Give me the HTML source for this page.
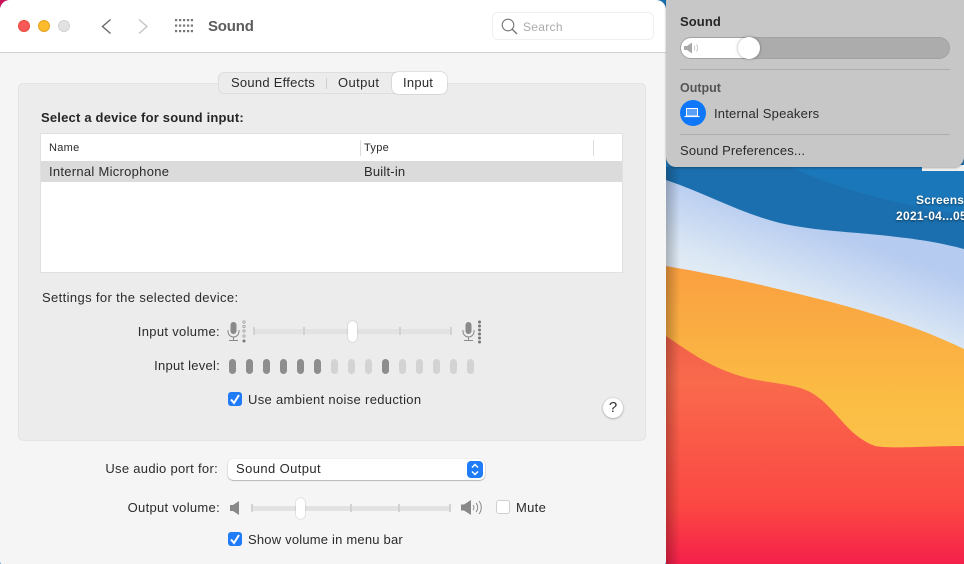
<!DOCTYPE html>
<html><head><meta charset="utf-8"><style>
html,body{margin:0;padding:0;width:964px;height:564px;overflow:hidden;background:#1b6fae}
*{box-sizing:border-box}
body{font-family:"Liberation Sans",sans-serif;font-size:13px;color:#2b2b2b;position:relative}
.t{position:absolute;white-space:nowrap;line-height:16px;letter-spacing:.25px}
.r{text-align:right}
.a{position:absolute}
.win{position:absolute;left:0;top:0;width:666px;height:567px;background:#f5f5f5;border-radius:10px 10px 6px 6px;overflow:hidden}
.pill{position:absolute;top:359px;width:7px;height:15px;border-radius:3.5px;background:#d3d3d3}
.pill.d{background:#8d8d8d}
.chk{position:absolute;width:14px;height:14px;border-radius:3px;background:#1f7cf6}
.tick{position:absolute;width:2px;height:8px;background:#d2d2d2}
.track{position:absolute;height:5px;background:#e2e2e2;border-radius:2px}
.thumb{position:absolute;width:9px;height:21px;background:#fff;border-radius:5px;box-shadow:0 0 1.5px rgba(0,0,0,.3)}
</style></head><body>
<div class="a" style="left:0;top:0;width:12px;height:8px;background:#c8125a"></div>
<svg class="a" style="left:666px;top:0" width="298" height="564" viewBox="666 0 298 564">
<defs>
<linearGradient id="lb" gradientUnits="userSpaceOnUse" x1="800" y1="220" x2="760" y2="330"><stop offset="0" stop-color="#b6cbf0"/><stop offset=".6" stop-color="#dce8f4"/><stop offset="1" stop-color="#e8f0f6"/></linearGradient>
<linearGradient id="or" x1="0" y1="0" x2="0" y2="1"><stop offset="0" stop-color="#fa9f40"/><stop offset=".7" stop-color="#fbbd44"/><stop offset="1" stop-color="#fbc24a"/></linearGradient>
<linearGradient id="rd" x1="0" y1="0" x2="0" y2="1"><stop offset="0" stop-color="#f0604a"/><stop offset=".2" stop-color="#f96a4c"/><stop offset=".75" stop-color="#fb4743"/><stop offset="1" stop-color="#f5204a"/></linearGradient>
<linearGradient id="sh" x1="0" y1="0" x2="1" y2="0"><stop offset="0" stop-color="#000" stop-opacity=".24"/><stop offset="1" stop-color="#000" stop-opacity="0"/></linearGradient>
</defs>
<rect x="666" y="0" width="298" height="564" fill="#1b6fae"/>
<path d="M790 167C840 190 900 205 964 215V167Z" fill="#1a77ba"/>
<path d="M666 180C705 193 740 213 780 223C820 232 860 232 897 237C925 240 945 244 964 249V350H666Z" fill="url(#lb)"/>
<path d="M666 266C730 277 780 289 831 302C880 315 925 330 964 349V460H666Z" fill="url(#or)"/>
<path d="M666 336C690 352 710 368 747 378C775 384 795 384 810 392C835 405 845 435 875 446C890 449 930 446 964 446V564H666Z" fill="url(#rd)"/>
<rect x="666" y="167" width="14" height="397" fill="url(#sh)"/>
</svg>
<div class="a" style="left:922px;top:165px;width:42px;height:6px;background:#f2f2f2"></div>
<div class="t" style="left:916px;top:192px;color:#fff;font-weight:bold;font-size:12px;letter-spacing:.2px;text-shadow:0 1px 2px rgba(0,0,0,.5)">Screenshot</div>
<div class="t" style="left:896px;top:208px;color:#fff;font-weight:bold;font-size:12px;letter-spacing:.3px;text-shadow:0 1px 2px rgba(0,0,0,.5)">2021-04...05</div>

<div class="win">
  <div class="a" style="left:0;top:0;width:666px;height:53px;background:#fff;border-bottom:1px solid #d2d2d2"></div>
  <div class="a" style="left:18px;top:20px;width:12px;height:12px;border-radius:50%;background:#f95a57;border:1px solid #e6483f"></div>
  <div class="a" style="left:38px;top:20px;width:12px;height:12px;border-radius:50%;background:#fdbb2e;border:1px solid #e5a325"></div>
  <div class="a" style="left:58px;top:20px;width:12px;height:12px;border-radius:50%;background:#e2e2e2;border:1px solid #d2d2d2"></div>
  <svg class="a" style="left:100px;top:18px" width="50" height="17" fill="none" stroke-width="1.4"><path d="M10.500 1.500 2.500 8.500 10.500 15.500" stroke="#6a6a6a"/><path d="M39 1.500 47 8.500 39 15.500" stroke="#c4c4c4"/></svg>
  <svg class="a" style="left:175px;top:19px" width="18" height="14" fill="#777"><rect x="0" y="0" width="2.200" height="2.200"/><rect x="4" y="0" width="2.200" height="2.200"/><rect x="8" y="0" width="2.200" height="2.200"/><rect x="12" y="0" width="2.200" height="2.200"/><rect x="15.800" y="0" width="2.200" height="2.200"/><rect x="0" y="5.500" width="2.200" height="2.200"/><rect x="4" y="5.500" width="2.200" height="2.200"/><rect x="8" y="5.500" width="2.200" height="2.200"/><rect x="12" y="5.500" width="2.200" height="2.200"/><rect x="15.800" y="5.500" width="2.200" height="2.200"/><rect x="0" y="11" width="2.200" height="2.200"/><rect x="4" y="11" width="2.200" height="2.200"/><rect x="8" y="11" width="2.200" height="2.200"/><rect x="12" y="11" width="2.200" height="2.200"/><rect x="15.800" y="11" width="2.200" height="2.200"/></svg>
  <div class="t" style="left:208px;top:18px;font-size:15px;line-height:17px;font-weight:bold;color:#5c5c5c;letter-spacing:-.2px">Sound</div>
  <div class="a" style="left:492px;top:12px;width:162px;height:28px;border:1px solid #efefef;border-radius:6px;background:#fff"></div>
  <svg class="a" style="left:501px;top:18px" width="18" height="17" fill="none" stroke="#777" stroke-width="1.100"><circle cx="7" cy="7" r="5.800"/><path d="M11.200 11.200 16 16" stroke-width="1.400"/></svg>
  <div class="t" style="left:523px;top:19px;font-size:12px;color:#ababab;letter-spacing:.3px">Search</div>

  <div class="a" style="left:18px;top:83px;width:628px;height:358px;background:#ececec;border:1px solid #e4e4e4;border-radius:5px"></div>
  <div class="a" style="left:218px;top:72px;width:229px;height:22px;background:#ececec;border:1px solid #dedede;border-radius:6px"></div>
  <div class="a" style="left:392px;top:72px;width:55px;height:22px;background:#fff;border-radius:6px;box-shadow:0 0 1px rgba(0,0,0,.5)"></div>
  <div class="a" style="left:326px;top:78px;width:1px;height:11px;background:#cfcfcf"></div>
  <div class="t" style="left:231px;top:75px">Sound Effects</div>
  <div class="t" style="left:338px;top:75px;letter-spacing:.4px">Output</div>
  <div class="t" style="left:403px;top:75px">Input</div>

  <div class="t" style="left:41px;top:110px;font-weight:bold;letter-spacing:.2px;color:#262626">Select a device for sound input:</div>
  <div class="a" style="left:40px;top:133px;width:583px;height:140px;background:#fff;border:1px solid #e0e0e0"></div>
  <div class="a" style="left:41px;top:161px;width:581px;height:21px;background:#dbdbdb"></div>
  <div class="a" style="left:360px;top:140px;width:1px;height:16px;background:#dcdcdc"></div>
  <div class="a" style="left:593px;top:140px;width:1px;height:16px;background:#dcdcdc"></div>
  <div class="t" style="left:49px;top:140px;font-size:11px;letter-spacing:.3px">Name</div>
  <div class="t" style="left:364px;top:140px;font-size:11px;letter-spacing:.3px">Type</div>
  <div class="t" style="left:49px;top:164px;letter-spacing:.28px">Internal Microphone</div>
  <div class="t" style="left:364px;top:164px;letter-spacing:.2px">Built-in</div>

  <div class="t" style="left:42px;top:290px;letter-spacing:.37px">Settings for the selected device:</div>
  <div class="t r" style="left:90px;width:130px;top:324px;letter-spacing:.32px">Input volume:</div>
  <div class="t r" style="left:90px;width:130px;top:358px">Input level:</div>

  <svg class="a" style="left:226px;top:320px" width="22" height="24"><rect x="4.500" y="2" width="6" height="12" rx="3" fill="#8a8a8a"/><path d="M2 10v1.500a5.500 5.500 0 0 0 11 0V10M7.500 17v3.500M3 20.500h9" fill="none" stroke="#8a8a8a" stroke-width="1"/><g fill="#e4e4e4" stroke="#a5a5a5" stroke-width=".8"><circle cx="18" cy="2" r="1.200"/><circle cx="18" cy="6.500" r="1.200"/><circle cx="18" cy="11" r="1.200"/><circle cx="18" cy="16" r="1.200"/></g><circle cx="18" cy="21" r="1.500" fill="#777"/></svg>
  <div class="track" style="left:253px;top:329px;width:198px"></div>
  <div class="tick" style="left:253px;top:327px"></div><div class="tick" style="left:303px;top:327px"></div><div class="tick" style="left:399px;top:327px"></div><div class="tick" style="left:450px;top:327px"></div>
  <div class="thumb" style="left:348px;top:321px"></div>
  <svg class="a" style="left:461px;top:320px" width="22" height="24"><rect x="4.500" y="2" width="6" height="12" rx="3" fill="#8a8a8a"/><path d="M2 10v1.500a5.500 5.500 0 0 0 11 0V10M7.500 17v3.500M3 20.500h9" fill="none" stroke="#8a8a8a" stroke-width="1"/><g fill="#777"><circle cx="18.500" cy="2" r="1.500"/><circle cx="18.500" cy="6" r="1.500"/><circle cx="18.500" cy="10" r="1.500"/><circle cx="18.500" cy="14" r="1.500"/><circle cx="18.500" cy="18" r="1.500"/><circle cx="18.500" cy="22" r="1.500"/></g></svg>

  <div class="pill d" style="left:229px"></div><div class="pill d" style="left:246px"></div><div class="pill d" style="left:263px"></div><div class="pill d" style="left:280px"></div><div class="pill d" style="left:297px"></div><div class="pill d" style="left:314px"></div><div class="pill" style="left:331px"></div><div class="pill" style="left:348px"></div><div class="pill" style="left:365px"></div><div class="pill d" style="left:382px"></div><div class="pill" style="left:399px"></div><div class="pill" style="left:416px"></div><div class="pill" style="left:433px"></div><div class="pill" style="left:450px"></div><div class="pill" style="left:467px"></div>

  <div class="chk" style="left:228px;top:392px"><svg width="14" height="14" fill="none" stroke="#fff" stroke-width="2"><path d="M3 7.500 6 11 11 3"/></svg></div>
  <div class="t" style="left:248px;top:392px;letter-spacing:.32px">Use ambient noise reduction</div>
  <div class="a" style="left:603px;top:398px;width:20px;height:20px;border-radius:50%;background:#fff;box-shadow:0 .5px 2px rgba(0,0,0,.4);text-align:center;font-size:15px;line-height:20px;color:#333">?</div>

  <div class="t r" style="left:60px;width:158px;top:461px;letter-spacing:.3px">Use audio port for:</div>
  <div class="a" style="left:228px;top:459px;width:257px;height:20.500px;background:#fff;border-radius:5px;box-shadow:0 .5px 1.200px rgba(0,0,0,.45)"></div>
  <div class="t" style="left:236px;top:461px;letter-spacing:.4px">Sound Output</div>
  <div class="a" style="left:467px;top:461px;width:16px;height:17px;background:#1f7cf6;border-radius:4px"><svg width="16" height="17" fill="none" stroke="#fff" stroke-width="1.500"><path d="M5 6.500 8 3.500 11 6.500M5 10.500 8 13.500 11 10.500"/></svg></div>

  <div class="t r" style="left:60px;width:160px;top:500px;letter-spacing:.3px">Output volume:</div>
  <svg class="a" style="left:229px;top:500px" width="14" height="16"><path d="M1 5H4L10 1V15L4 11H1Z" fill="#888"/></svg>
  <div class="track" style="left:251px;top:506px;width:200px"></div>
  <div class="tick" style="left:251px;top:504px"></div><div class="tick" style="left:350px;top:504px"></div><div class="tick" style="left:398px;top:504px"></div><div class="tick" style="left:449px;top:504px"></div>
  <div class="thumb" style="left:296px;top:498px"></div>
  <svg class="a" style="left:460px;top:499px" width="24" height="17" fill="none" stroke="#888"><path d="M1 5.500H4L11 1V16L4 11.500H1Z" fill="#888" stroke="none"/><path d="M13 6a4 4 0 0 1 0 5M16 4a7 7 0 0 1 0 9M19 2a10.500 10.500 0 0 1 0 13"/></svg>
  <div class="a" style="left:496px;top:500px;width:14px;height:14px;background:#fff;border:1px solid #cfcfcf;border-radius:3px"></div>
  <div class="t" style="left:516px;top:500px;letter-spacing:.3px">Mute</div>

  <div class="chk" style="left:228px;top:532px"><svg width="14" height="14" fill="none" stroke="#fff" stroke-width="2"><path d="M3 7.500 6 11 11 3"/></svg></div>
  <div class="t" style="left:248px;top:532px;letter-spacing:.2px">Show volume in menu bar</div>
</div>

<div class="a" style="left:666px;top:-10px;width:298px;height:177px;background:#c7c7c7;border-radius:10px;box-shadow:0 1px 2px rgba(0,0,0,.3)"></div>
<div class="t" style="left:680px;top:14px;font-weight:bold;color:#262626;letter-spacing:.1px">Sound</div>
<div class="a" style="left:680px;top:37px;width:270px;height:22px;background:#acacac;border:1px solid #a2a2a2;border-radius:11px;overflow:hidden"><div class="a" style="left:-1px;top:-1px;width:70px;height:22px;background:#fff"></div></div>
<div class="a" style="left:738px;top:37px;width:22px;height:22px;border-radius:50%;background:#fff;box-shadow:0 0 3px rgba(0,0,0,.35)"></div>
<svg class="a" style="left:684px;top:42px" width="16" height="12" fill="none" stroke="#c4c4c4"><path d="M0 4H3L8 .5V11.500L3 8H0Z" fill="#a8a8a8" stroke="none"/><path d="M10 4a3 3 0 0 1 0 4M12.500 2.500a6 6 0 0 1 0 7"/></svg>
<div class="a" style="left:680px;top:69px;width:270px;height:1px;background:#adadad"></div>
<div class="t" style="left:680px;top:80px;color:#555;font-weight:bold;font-size:12.500px;letter-spacing:0">Output</div>
<div class="a" style="left:680px;top:100px;width:26px;height:26px;border-radius:50%;background:#0f78fa"></div>
<svg class="a" style="left:684px;top:108px" width="18" height="10" fill="none" stroke="#fff"><path d="M2.500 .500H13.500V8H2.500Z" fill="#5aa0f5"/><path d="M.5 8.500H15.500" stroke-width="1.200"/></svg>
<div class="t" style="left:714px;top:106px;letter-spacing:.2px">Internal Speakers</div>
<div class="a" style="left:680px;top:134px;width:270px;height:1px;background:#adadad"></div>
<div class="t" style="left:680px;top:143px;letter-spacing:.15px">Sound Preferences...</div>
</body></html>
